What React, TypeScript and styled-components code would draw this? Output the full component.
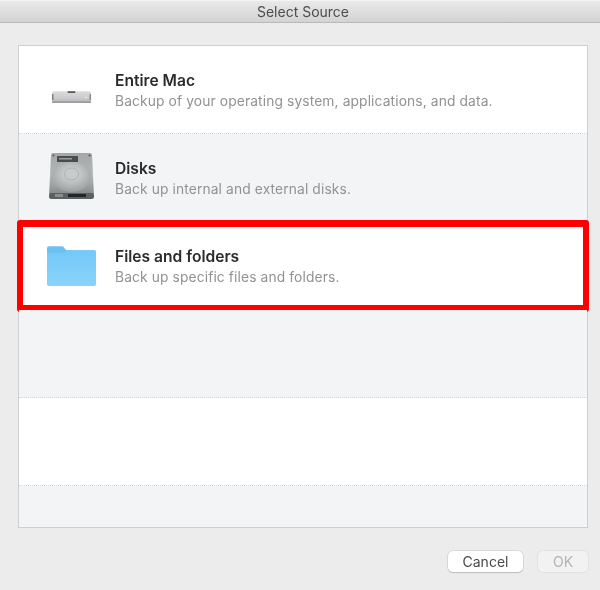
import styled, { createGlobalStyle } from "styled-components";

const GlobalStyle = createGlobalStyle`
  html, body {
    margin: 0;
    padding: 0;
    background: #ececec;
  }
  * {
    box-sizing: border-box;
  }
`;

const Window = styled.div`
  width: 600px;
  height: 590px;
  display: flex;
  flex-direction: column;
  background: #ececec;
  font-family: Inter, "Liberation Sans", sans-serif;
  overflow: hidden;
  filter: blur(0.35px);
`;

const TitleBar = styled.div`
  height: 23px;
  display: flex;
  align-items: center;
  justify-content: center;
  padding-left: 6px;
  background: linear-gradient(#e9e9e9, #d3d3d3);
  border-top: 1px solid #f4f4f4;
  border-bottom: 1px solid #b9b9b9;
  color: #4c4c4c;
  font-size: 14px;
`;

const Body = styled.div`
  flex: 1;
  display: flex;
  flex-direction: column;
  padding: 22px 12px 18px 18px;
`;

const List = styled.div`
  height: 483px;
  display: flex;
  flex-direction: column;
  border: 1px solid #cfcfcf;
`;

const Row = styled.div<{ $alt?: boolean }>`
  position: relative;
  height: 88px;
  flex: none;
  display: flex;
  align-items: center;
  background: ${(p) => (p.$alt ? "#f3f4f6" : "#ffffff")};
  border-bottom: 1px dotted #d4d4d4;

  &:last-child {
    flex: 1;
    border-bottom: 0;
  }
`;

const IconSlot = styled.div<{ $nudge: number }>`
  width: 96px;
  flex: none;
  display: flex;
  justify-content: center;
  padding-left: 9px;
  margin-top: ${(p) => p.$nudge}px;
`;

const RowText = styled.div`
  display: flex;
  flex-direction: column;
  gap: 2px;
  padding-top: 3px;
`;

const RowTitle = styled.div`
  font-size: 15.6px;
  line-height: 18px;
  font-weight: 600;
  color: #2b2b2b;
`;

const RowSub = styled.div`
  font-size: 13.8px;
  line-height: 18px;
  color: #929292;
  letter-spacing: 0.12px;
`;

const Highlight = styled.div`
  position: absolute;
  left: -2px;
  right: -2px;
  top: -2px;
  height: 92px;
  border-style: solid;
  border-color: #fe0000;
  border-width: 7px 6px;
  border-radius: 3px;
  pointer-events: none;
`;

const Footer = styled.div`
  display: flex;
  justify-content: flex-end;
  gap: 15px;
  margin-top: 23px;
`;

const Button = styled.div<{ $disabled?: boolean }>`
  height: 21px;
  width: ${(p) => (p.$disabled ? 50 : 75)}px;
  display: flex;
  align-items: center;
  justify-content: center;
  border-radius: 5px;
  font-size: 14px;
  color: ${(p) => (p.$disabled ? "#b4b4b4" : "#4a4a4a")};
  background: ${(p) => (p.$disabled ? "#f2f2f2" : "#ffffff")};
  box-shadow: ${(p) =>
    p.$disabled
      ? "0 0 0 1px #e2e2e2"
      : "0 0 0 0.5px #c8c8c8, 0 1px 1px #b5b5b5"};
`;

const MacIcon = () => (
  <svg width="41" height="14" viewBox="0 0 42 14">
    <defs>
      <linearGradient id="macBody" x1="0" y1="0" x2="0" y2="1">
        <stop offset="0" stopColor="#dcdcdd" />
        <stop offset="0.6" stopColor="#cbcbcd" />
        <stop offset="1" stopColor="#b0b0b2" />
      </linearGradient>
    </defs>
    <path d="M3 1h36q2 0 2 2.5V11q0 2-2 2H3q-2 0-2-2V3.500Q1 1 3 1z" fill="url(#macBody)" />
    <rect x="1" y="11.5" width="40" height="1.500" fill="#979799" />
    <rect x="1" y="4" width="1.500" height="6" fill="#7d7d7f" />
    <rect x="39.500" y="4" width="1.500" height="6" fill="#8a8a8c" />
    <rect x="17" y="1" width="8" height="2" rx="0.500" fill="#57575a" />
    <circle cx="36" cy="7.500" r="0.800" fill="#f2f2f2" />
  </svg>
);

const DiskIcon = () => (
  <svg width="47" height="48" viewBox="0 0 47 48">
    <defs>
      <linearGradient id="diskBody" x1="0" y1="0" x2="0" y2="1">
        <stop offset="0" stopColor="#a4a7a8" />
        <stop offset="0.5" stopColor="#b4b7b7" />
        <stop offset="1" stopColor="#7c7f80" />
      </linearGradient>
      <radialGradient id="platter" cx="0.5" cy="0.4" r="0.65">
        <stop offset="0" stopColor="#dcdede" />
        <stop offset="1" stopColor="#979a9b" />
      </radialGradient>
    </defs>
    <path d="M5 1h37q2 0 2 2l2 41q0 3-3 3H4q-3 0-3-3L3 3q0-2 2-2z" fill="url(#diskBody)" />
    <rect x="9" y="4" width="21" height="6" rx="0.500" fill="#4a4d4e" />
    <rect x="11" y="6" width="13" height="1.500" fill="#9a9d9e" />
    <ellipse cx="23.500" cy="25" rx="20" ry="15" fill="url(#platter)" />
    <ellipse cx="23.500" cy="22" rx="7" ry="6" fill="#c9cbcb" stroke="#9a9d9d" strokeWidth="0.600" />
    <circle cx="5.500" cy="3.500" r="1" fill="#55585a" />
    <circle cx="41.500" cy="3.500" r="1" fill="#55585a" />
    <path d="M2 41h43l1 3q0 3-3 3H4q-3 0-3-3z" fill="#5d6061" />
    <rect x="20" y="42" width="18" height="3" fill="#22262a" />
    <rect x="7" y="42" width="8" height="3" fill="#8a8d8e" />
  </svg>
);

const FolderIcon = () => (
  <svg width="49" height="40" viewBox="0 0 51 41">
    <defs>
      <linearGradient id="folderFront" x1="0" y1="0" x2="0" y2="1">
        <stop offset="0" stopColor="#74c8f8" />
        <stop offset="1" stopColor="#8ad3fa" />
      </linearGradient>
    </defs>
    <path d="M2 0h13q2 0 3 1.500L20 4h29q2 0 2 2v33q0 2-2 2H2q-2 0-2-2V2q0-2 2-2z" fill="#6cc1f2" />
    <path d="M0 8q0-1 1-1h16q2 0 3-2l1-1h28q2 0 2 2v33q0 2-2 2H2q-2 0-2-2z" fill="url(#folderFront)" />
  </svg>
);

const rows = [
  { title: "Entire Mac", sub: "Backup of your operating system, applications, and data.", icon: <MacIcon />, nudge: 14 },
  { title: "Disks", sub: "Back up internal and external disks.", icon: <DiskIcon />, nudge: -3 },
  { title: "Files and folders", sub: "Back up specific files and folders.", icon: <FolderIcon />, nudge: 0, selected: true },
];

export default function App() {
  return (
    <>
      <GlobalStyle />
      <Window>
        <TitleBar>Select Source</TitleBar>
        <Body>
          <List>
            {rows.map((r, i) => (
              <Row key={r.title} $alt={i % 2 === 1}>
                <IconSlot $nudge={r.nudge}>{r.icon}</IconSlot>
                <RowText>
                  <RowTitle>{r.title}</RowTitle>
                  <RowSub>{r.sub}</RowSub>
                </RowText>
                {r.selected && <Highlight />}
              </Row>
            ))}
            <Row $alt />
            <Row />
            <Row $alt />
          </List>
          <Footer>
            <Button>Cancel</Button>
            <Button $disabled>OK</Button>
          </Footer>
        </Body>
      </Window>
    </>
  );
}
